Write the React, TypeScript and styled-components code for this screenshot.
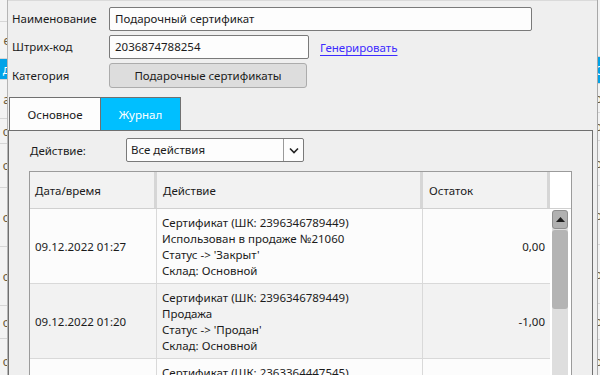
import React from "react";
import styled, { createGlobalStyle } from "styled-components";

const Global = createGlobalStyle`
  html, body { margin: 0; padding: 0; }
  body {
    width: 600px; height: 375px; overflow: hidden;
    font-family: "Noto Sans", "Open Sans", sans-serif;
    font-size: 11.5px; color: #1b1b1b; background: #f0f0f0;
  }
`;

const Screen = styled.div`
  display: flex;
  width: 600px;
  height: 375px;
  overflow: hidden;
  background: #f0f0f0;
`;

/* background application peeking around the dialog */
const BgStrip = styled.div<{ $w: number; $side: "left" | "right" }>`
  width: ${(p) => p.$w}px;
  flex: none;
  display: flex;
  flex-direction: column;
  overflow: hidden;
  background: #f3f3f3;
  ${(p) => (p.$side === "left" ? "border-right: 1px solid #b5b5b5;" : "border-left: 1px solid #a8a8a8;")}
`;

const BgCell = styled.div<{ $h: number; $blue?: boolean; $side: "left" | "right" }>`
  height: ${(p) => p.$h}px;
  flex: none;
  display: flex;
  align-items: center;
  justify-content: ${(p) => (p.$side === "left" ? "flex-end" : "flex-start")};
  border-bottom: 1px solid #d6d6d6;
  background: ${(p) => (p.$blue ? "#00a2e8" : "transparent")};
  color: ${(p) => (p.$blue ? "#fff" : "#6a5a3a")};
  white-space: nowrap;
  font-size: 12px;
  overflow: hidden;
`;

const Dialog = styled.div`
  flex: 1;
  min-width: 0;
  display: flex;
  flex-direction: column;
  background: #efefef;
  border-top: 1px solid #dadada;
`;

const Form = styled.div`
  display: grid;
  grid-template-columns: 97px 1fr;
  row-gap: 4px;
  padding: 6px 0 0 4px;
  align-items: center;
`;

const Label = styled.div`
  line-height: 24px;
`;

const FieldRow = styled.div`
  display: flex;
  align-items: center;
  gap: 11px;
`;

const TextInput = styled.div<{ $w: number }>`
  width: ${(p) => p.$w}px;
  height: 24px;
  box-sizing: border-box;
  border: 1px solid #7a7a7a;
  border-radius: 2px;
  background: #fdfdfd;
  padding: 0 5px;
  line-height: 22px;
  white-space: nowrap;
  overflow: hidden;
`;

const Link = styled.a`
  color: #3c2bff;
  text-decoration: underline;
  text-underline-offset: 3px;
  cursor: pointer;
`;

const CatButton = styled.div`
  width: 198px;
  height: 25px;
  box-sizing: border-box;
  border: 1px solid #acacac;
  border-radius: 3px;
  background: #dddddd;
  text-align: center;
  line-height: 23px;
`;

const Tabs = styled.div`
  display: flex;
  margin: 9px 0 0 1px;
`;

const Tab = styled.div<{ $active?: boolean; $w: number }>`
  width: ${(p) => p.$w}px;
  height: 33px;
  box-sizing: border-box;
  display: flex;
  align-items: center;
  justify-content: center;
  border: 1px solid #707070;
  border-bottom: none;
  ${(p) => (p.$active ? "border-left: none;" : "")}
  background: ${(p) => (p.$active ? "#00bfff" : "#fdfdfd")};
  color: ${(p) => (p.$active ? "#ffffff" : "#1b1b1b")};
`;

const Panel = styled.div`
  margin: 0 4px 0 0;
  flex: 1;
  border: 1px solid #6f6f6f;
  border-bottom: none;
  padding: 7px 0 0 20px;
  display: flex;
  flex-direction: column;
`;

const FilterRow = styled.div`
  display: flex;
  align-items: center;
`;

const FilterLabel = styled.div`
  width: 96px;
  padding-left: 1px;
`;

const Select = styled.div`
  width: 178px;
  height: 24px;
  box-sizing: border-box;
  display: flex;
  border: 1px solid #7a7a7a;
  border-radius: 2px;
  background: #fdfdfd;
`;

const SelectValue = styled.div`
  flex: 1;
  padding-left: 4px;
  line-height: 22px;
`;

const SelectBtn = styled.div`
  width: 19px;
  border-left: 1px solid #9a9a9a;
  display: flex;
  align-items: center;
  justify-content: center;
`;

const Table = styled.div`
  margin-top: 9px;
  width: 543px;
  box-sizing: border-box;
  border: 1px solid #9b9b9b;
  border-bottom: none;
  background: #ffffff;
  flex: 1;
  display: flex;
  flex-direction: column;
  overflow: hidden;
`;

const HeadRow = styled.div`
  display: grid;
  grid-template-columns: 127px 266px 127px 21px;
  height: 36px;
  border-bottom: 1px solid #d0d0d0;
`;

const HeadCell = styled.div<{ $blank?: boolean; $pad: number }>`
  display: flex;
  align-items: center;
  padding-left: ${(p) => p.$pad}px;
  background: ${(p) => (p.$blank ? "#ffffff" : "#f2f2f2")};
  border-right: ${(p) => (p.$blank ? "none" : "3px solid #d6d6d6")};
`;

const Body = styled.div`
  display: flex;
  flex: 1;
  min-height: 0;
`;

const Rows = styled.div`
  width: 520px;
  display: flex;
  flex-direction: column;
`;

const Row = styled.div<{ $alt?: boolean }>`
  display: grid;
  grid-template-columns: 127px 266px 127px;
  border-bottom: 1px solid #d9d9d9;
  background: ${(p) => (p.$alt ? "#f2f2f2" : "#fcfcfc")};
`;

const Cell = styled.div<{ $align?: "left" | "right" }>`
  display: flex;
  align-items: center;
  justify-content: ${(p) => (p.$align === "right" ? "flex-end" : "flex-start")};
  padding: 0 ${(p) => (p.$align === "right" ? "5px" : "0")} 0 ${(p) => (p.$align === "right" ? "0" : "5px")};
  border-right: 1px solid #d9d9d9;
  &:last-child { border-right: none; }
`;

const ActionCell = styled.div`
  padding: 6px 0 4px 5px;
  line-height: 16px;
  border-right: 1px solid #d9d9d9;
  white-space: nowrap;
`;

const ScrollCol = styled.div`
  width: 21px;
  flex: none;
  padding: 1px 0 0 2px;
  box-sizing: border-box;
  display: flex;
  flex-direction: column;
  background: #ffffff;
`;

const Track = styled.div`
  width: 16px;
  flex: 1;
  border-radius: 3px;
  background: #dedede;
  display: flex;
  flex-direction: column;
  gap: 1px;
`;

const ArrowBtn = styled.div`
  height: 19px;
  box-sizing: border-box;
  border: 1px solid #8f8f8f;
  border-radius: 3px;
  background: #b1b1b1;
  display: flex;
  align-items: center;
  justify-content: center;
`;

const Thumb = styled.div`
  height: 79px;
  border-radius: 3px;
  background: #b4b4b4;
`;

const rows = [
  {
    date: "09.12.2022 01:27",
    lines: ["Сертификат (ШК: 2396346789449)", "Использован в продаже №21060", "Статус -> 'Закрыт'", "Склад: Основной"],
    rest: "0,00",
  },
  {
    date: "09.12.2022 01:20",
    lines: ["Сертификат (ШК: 2396346789449)", "Продажа", "Статус -> 'Продан'", "Склад: Основной"],
    rest: "-1,00",
  },
  {
    date: "09.12.2022 01:15",
    lines: ["Сертификат (ШК: 2363364447545)", "Продажа", "Статус -> 'Продан'", "Склад: Основной"],
    rest: "-1,00",
  },
];

const leftBg = [
  { h: 21, t: "" },
  { h: 36, t: "е" },
  { h: 20, t: "д", blue: true },
  { h: 38, t: "а" },
  { h: 24, t: "о" },
  { h: 43, t: "о" },
  { h: 58, t: "о" },
  { h: 58, t: "о" },
  { h: 32, t: "о" },
  { h: 45, t: "о" },
];

const rightBg = [
  { h: 56, t: "" },
  { h: 26, t: "О", blue: true },
  { h: 28, t: "о" },
  { h: 27, t: "о" },
  { h: 44, t: "о" },
  { h: 58, t: "о" },
  { h: 58, t: "о" },
  { h: 35, t: "о" },
  { h: 43, t: "о" },
];

export default function App() {
  return (
    <>
      <Global />
      <Screen>
        <BgStrip $w={7} $side="left">
          {leftBg.map((c, i) => (
            <BgCell key={i} $h={c.h} $blue={c.blue} $side="left">
              <span style={{ marginRight: -3 }}>{c.t}</span>
            </BgCell>
          ))}
        </BgStrip>
        <Dialog>
          <Form>
            <Label>Наименование</Label>
            <TextInput $w={423}>Подарочный сертификат</TextInput>
            <Label>Штрих-код</Label>
            <FieldRow>
              <TextInput $w={200}>2036874788254</TextInput>
              <Link>Генерировать</Link>
            </FieldRow>
            <Label>Категория</Label>
            <CatButton>Подарочные сертификаты</CatButton>
          </Form>
          <Tabs>
            <Tab $w={92}>Основное</Tab>
            <Tab $w={80} $active>Журнал</Tab>
          </Tabs>
          <Panel>
            <FilterRow>
              <FilterLabel>Действие:</FilterLabel>
              <Select>
                <SelectValue>Все действия</SelectValue>
                <SelectBtn>
                  <svg width="10" height="7" viewBox="0 0 10 7">
                    <path d="M1 1.5 L5 5.5 L9 1.5" fill="none" stroke="#222" strokeWidth="1.6" />
                  </svg>
                </SelectBtn>
              </Select>
            </FilterRow>
            <Table>
              <HeadRow>
                <HeadCell $pad={5}>Дата/время</HeadCell>
                <HeadCell $pad={6}>Действие</HeadCell>
                <HeadCell $pad={6}>Остаток</HeadCell>
                <HeadCell $pad={0} $blank />
              </HeadRow>
              <Body>
                <Rows>
                  {rows.map((r, i) => (
                    <Row key={i} $alt={i % 2 === 1}>
                      <Cell>{r.date}</Cell>
                      <ActionCell>
                        {r.lines.map((l, j) => (
                          <div key={j}>{l}</div>
                        ))}
                      </ActionCell>
                      <Cell $align="right">{r.rest}</Cell>
                    </Row>
                  ))}
                </Rows>
                <ScrollCol>
                  <Track>
                    <ArrowBtn>
                      <svg width="9" height="5" viewBox="0 0 9 5">
                        <path d="M0 5 L4.5 0 L9 5 Z" fill="#1e1e1e" />
                      </svg>
                    </ArrowBtn>
                    <Thumb />
                  </Track>
                </ScrollCol>
              </Body>
            </Table>
          </Panel>
        </Dialog>
        <BgStrip $w={2} $side="right">
          {rightBg.map((c, i) => (
            <BgCell key={i} $h={c.h} $blue={c.blue} $side="right">
              <span style={{ marginLeft: -3 }}>{c.t}</span>
            </BgCell>
          ))}
        </BgStrip>
      </Screen>
    </>
  );
}
